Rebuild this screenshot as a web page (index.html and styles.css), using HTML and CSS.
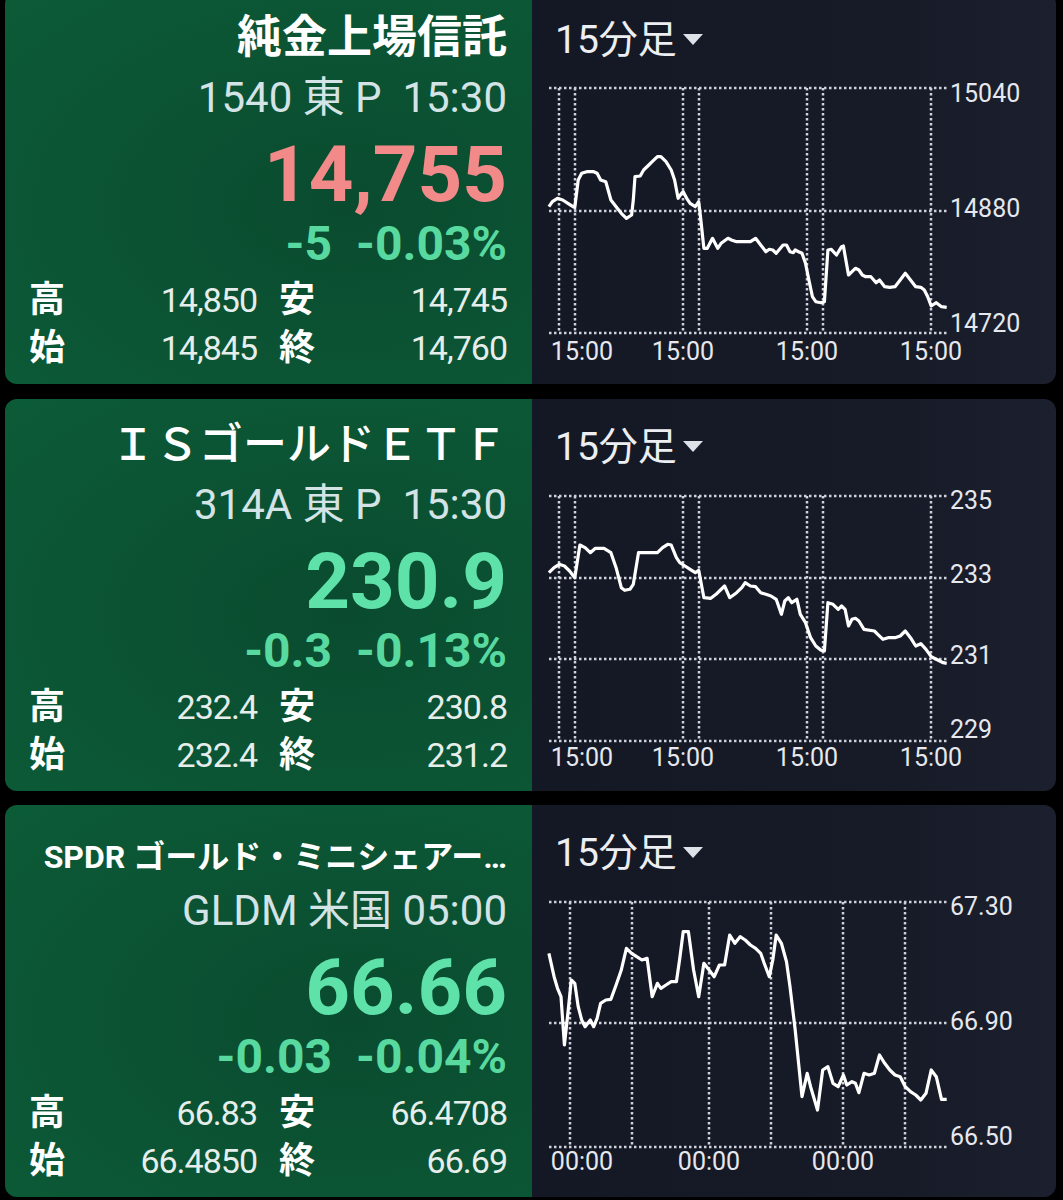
FILE: index.html
```html
<!DOCTYPE html>
<html lang="ja">
<head>
    <meta charset="UTF-8">
    <meta name="viewport" content="width=device-width, initial-scale=1.0">
    <title>ウォッチリスト</title>
    <link rel="stylesheet" href="styles.css">
</head>
<body>
    <div class="list">

        <!-- 1540 純金上場信託 -->
        <section class="card">
            <div class="quote">
                <h2 class="name">純金上場信託</h2>
                <div class="meta">1540 東 P&nbsp; 15:30</div>
                <div class="price red">14,755</div>
                <div class="change"><span>-5</span><span>-0.03%</span></div>
                <dl class="ohlc">
                    <dt>高</dt><dd>14,850</dd><dt>安</dt><dd>14,745</dd>
                    <dt>始</dt><dd>14,845</dd><dt>終</dt><dd>14,760</dd>
                </dl>
            </div>
            <div class="chart">
                <div class="chart-head">15分足<span class="caret"></span></div>
                <svg class="plot" viewBox="0 0 524 312">
                    <path class="grid" d="M17 16H415M17 139H415M17 261H415M27 16V261M43 16V261M151 16V261M167 16V261M275 16V261M291 16V261M399 16V261"/>
                    <polyline class="line" points="16.9,134.7 20.4,129.7 25.5,126.3 30.7,128 35.9,131.3 41,134.7 42.8,135.3 46.2,108 49.7,101.3 54.8,99.7 61.7,99.7 65.1,101.3 68.6,108 73.8,109.7 78.9,128 84.1,134.7 89.3,141.3 94.4,146.3 99.6,143 101.3,128 103,104.7 108.2,104 111.6,98 116.8,93 120.2,89.7 125.4,84.7 128.9,84.7 134,89.7 139.2,98 142.6,108 146.1,126.3 149.5,121.3 151.2,119.7 154.7,126.3 158.1,131.3 163.3,134.7 166.7,129.7 168.5,144.7 171.9,176.3 175.3,176.3 180.5,166.3 185.7,176.3 189.1,171.3 196,166.3 199.4,168 204.6,169.7 218.4,169.7 223.6,166.3 228.7,173 233.9,179.7 237.3,177.3 240.8,178 244.2,181.3 251.1,173 254.5,173 258,179.7 261.4,180.7 263.2,178 266.6,179.7 270,181.3 273.5,191.3 276.9,208 280.4,224.7 283.8,229.7 289,230.7 292.4,229.7 295.9,178 299.3,177.3 304.5,183 309.6,174.7 311.4,174 316.5,203 320,199.7 323.4,196.3 326.9,198 330.3,203 333.7,204.7 338.9,204.7 344.1,210.7 347.5,208 352.7,214.7 357.8,215.3 363,214.7 368.2,208 373.3,201.3 378.5,208 383.7,214.7 388.8,215.3 392.3,218 395.7,224.7 399.2,234 404.3,230.7 409.5,234.7 414.7,235.3"/>
                    <text class="axis" x="418" y="30">15040</text>
                    <text class="axis" x="418" y="145">14880</text>
                    <text class="axis" x="418" y="260">14720</text>
                    <text class="axis mid" x="50" y="288">15:00</text>
                    <text class="axis mid" x="151" y="288">15:00</text>
                    <text class="axis mid" x="275" y="288">15:00</text>
                    <text class="axis mid" x="399" y="288">15:00</text>
                </svg>
            </div>
        </section>

        <!-- 314A ISゴールドETF -->
        <section class="card">
            <div class="quote">
                <h2 class="name wide">ＩＳゴールドＥＴＦ</h2>
                <div class="meta">314A 東 P&nbsp; 15:30</div>
                <div class="price green">230.9</div>
                <div class="change"><span>-0.3</span><span>-0.13%</span></div>
                <dl class="ohlc">
                    <dt>高</dt><dd>232.4</dd><dt>安</dt><dd>230.8</dd>
                    <dt>始</dt><dd>232.4</dd><dt>終</dt><dd>231.2</dd>
                </dl>
            </div>
            <div class="chart">
                <div class="chart-head">15分足<span class="caret"></span></div>
                <svg class="plot" viewBox="0 0 524 312">
                    <path class="grid" d="M17 17H415M17 99H415M17 180H415M17 262H415M27 17V262M43 17V262M151 17V262M167 17V262M275 17V262M291 17V262M399 17V262"/>
                    <polyline class="line" points="16.9,93.7 22.1,88.7 27.3,85.3 32.4,87 37.6,92 42.8,98.7 47.9,66 53.1,68.7 58.3,73.7 63.4,69.3 72,69.3 78.9,73.7 84.1,88.7 89.3,108.7 92.7,111.3 97.9,110.3 101.3,105.3 106.5,73.7 111.6,73.7 125.4,73.7 130.6,68.7 135.7,65.3 139.2,66 144.4,78.7 147.8,83.7 153,87 158.1,90.3 163.3,93.7 166.7,91.3 171.9,118.7 178.8,119.3 184,115.3 187.4,112 192.6,107 197.7,118.7 204.6,113.7 209.8,108.7 213.2,103.7 218.4,107 223.6,107.7 228.7,113.7 233.9,115.3 239,117 244.2,120.3 249.4,135.3 252.8,122 256.3,118.7 259.7,123.7 264.9,120.3 268.3,135.3 273.5,143.7 278.6,158.7 283.8,167 289,171.3 292.4,172 295.9,123.7 301,125.3 306.2,130.3 309.6,127 313.1,130.3 316.5,147 320,140.3 323.4,139.3 326.9,142 332,150.3 342.4,152 345.8,155.3 351,160.3 356.1,158.7 363,158.7 368.2,157 373.3,152 378.5,158.7 383.7,167 388.8,164.7 394,170.3 399.2,177.7 404.3,180.3 411.2,183.7 414.7,184.3"/>
                    <text class="axis" x="418" y="30">235</text>
                    <text class="axis" x="418" y="104">233</text>
                    <text class="axis" x="418" y="185">231</text>
                    <text class="axis" x="418" y="259">229</text>
                    <text class="axis mid" x="50" y="287">15:00</text>
                    <text class="axis mid" x="151" y="287">15:00</text>
                    <text class="axis mid" x="275" y="287">15:00</text>
                    <text class="axis mid" x="399" y="287">15:00</text>
                </svg>
            </div>
        </section>

        <!-- GLDM SPDR ゴールド・ミニシェアーズ -->
        <section class="card">
            <div class="quote">
                <h2 class="name small">SPDR ゴールド・ミニシェアー…</h2>
                <div class="meta">GLDM 米国 05:00</div>
                <div class="price green">66.66</div>
                <div class="change"><span>-0.03</span><span>-0.04%</span></div>
                <dl class="ohlc">
                    <dt>高</dt><dd>66.83</dd><dt>安</dt><dd>66.4708</dd>
                    <dt>始</dt><dd>66.4850</dd><dt>終</dt><dd>66.69</dd>
                </dl>
            </div>
            <div class="chart">
                <div class="chart-head">15分足<span class="caret"></span></div>
                <svg class="plot" viewBox="0 0 524 312">
                    <path class="grid" d="M17 17H415M17 138H415M17 262H415M38 17V262M100 17V262M177 17V262M239 17V262M311 17V262M373 17V262"/>
                    <polyline class="line" points="16.9,68.3 22.1,91.7 25.5,103.3 29,111.7 32.4,160 35.9,128.3 39.3,95 42.8,98.3 46.2,121.7 49.7,135 53.1,141.7 58.3,135 61.7,141.7 65.1,133.3 68.6,118.3 73.8,115 78.9,114.3 84.1,100 89.3,85 94.4,63.3 99.6,68.3 104.7,71.7 109.9,75 115.1,73.3 120.2,111.7 125.4,98.3 128.9,103.3 134,100 139.2,96.7 144.4,96.7 147.8,73.3 151.2,46.7 156.4,46.7 161.6,85 166.7,111.7 171.9,78.3 177.1,85 182.2,91.7 187.4,80 192.6,80 197.7,50 202.9,58.3 208.1,51.7 213.2,55 218.4,60 223.6,63.3 228.7,68.3 232.2,78.3 237.3,91.7 240.8,75 244.2,50 249.4,58.3 254.5,76.7 258,101.7 263.2,145 266.6,178.3 270,211.7 275.2,188.3 278.6,201.7 285.5,225 290.7,185 295.9,181.7 301,198.3 306.2,201.7 311.4,190 314.8,200 320,196.7 323.4,198.3 326.9,207.7 332,188.3 337.2,190 342.4,188.3 347.5,170 352.7,178.3 357.8,185 363,190 368.2,191.7 373.3,201.7 378.5,206.7 383.7,210 388.8,215 394,208.3 399.2,185 404.3,191.7 409.5,214.3 414.7,214.3"/>
                    <text class="axis" x="418" y="30">67.30</text>
                    <text class="axis" x="418" y="145">66.90</text>
                    <text class="axis" x="418" y="260">66.50</text>
                    <text class="axis mid" x="50" y="285">00:00</text>
                    <text class="axis mid" x="177" y="285">00:00</text>
                    <text class="axis mid" x="311" y="285">00:00</text>
                </svg>
            </div>
        </section>

    </div>
</body>
</html>
```

FILE: styles.css
```css
/* General styles */
* {
    margin: 0;
    padding: 0;
    box-sizing: border-box;
}

body {
    font-family: Roboto, "Noto Sans CJK JP", sans-serif;
    background-color: #000;
    padding: 0 7px 0 5px;
    height: 1200px;
    overflow: hidden;
}

/* Card list */
.list {
    display: flex;
    flex-direction: column;
    gap: 14.5px;
    margin-top: -8px;
}

.card {
    display: grid;
    grid-template-columns: 527px 1fr;
    height: 392px;
    border-radius: 12px;
    overflow: hidden;
}

/* Left: quote panel */
.quote {
    background: radial-gradient(ellipse at 65% 55%, #0a4b2f 0%, #0b5434 55%, #0c5b37 100%);
    padding: 14px 25px 0 24px;
    color: #fff;
    text-align: right;
}

.name {
    font-size: 45px;
    font-weight: 700;
    line-height: 64px;
    white-space: nowrap;
}

.name.wide {
    font-size: 44px;
    font-weight: 500;
}

.name.small {
    font-size: 32px;
    line-height: 52px;
    padding-top: 12px;
}

.meta {
    font-size: 42px;
    line-height: 56px;
    color: #d3e3e6;
    white-space: nowrap;
}

.price {
    font-size: 78px;
    font-weight: 700;
    line-height: 98px;
}

.price.red {
    color: #f38a8a;
}

.price.green {
    color: #5ee2aa;
}

.change {
    display: flex;
    justify-content: flex-end;
    gap: 24px;
    font-size: 48px;
    font-weight: 700;
    line-height: 40px;
    color: #58d9a0;
}

/* High / low / open / close */
.ohlc {
    display: grid;
    grid-template-columns: auto 1fr auto 1fr;
    column-gap: 22px;
    margin-top: 12px;
    line-height: 48px;
    text-align: left;
}

.ohlc dt {
    font-size: 36px;
    font-weight: 700;
    color: #fff;
}

.ohlc dd {
    font-size: 34px;
    letter-spacing: -1px;
    color: #e6eeec;
    text-align: right;
}

/* Right: chart panel */
.chart {
    background: linear-gradient(90deg, #141724 0%, #171a27 70%, #1c202e 100%);
    color: #eceef2;
}

.chart-head {
    display: flex;
    align-items: flex-start;
    height: 80px;
    padding: 23px 0 0 23px;
    font-size: 39px;
    line-height: 50px;
}

.caret {
    width: 0;
    height: 0;
    border-left: 10px solid transparent;
    border-right: 10px solid transparent;
    border-top: 11px solid #dde1e8;
    margin: 19px 0 0 6px;
}

.plot {
    display: block;
    width: 524px;
    height: 312px;
}

.grid {
    fill: none;
    stroke: #cdd1d9;
    stroke-width: 2.5;
    stroke-dasharray: 2.5 2.5;
}

.line {
    fill: none;
    stroke: #fff;
    stroke-width: 3.2;
    stroke-linejoin: round;
}

.axis {
    fill: #e6e8ee;
    font-size: 25px;
    font-family: Roboto, sans-serif;
}

.axis.mid {
    text-anchor: middle;
}
```
